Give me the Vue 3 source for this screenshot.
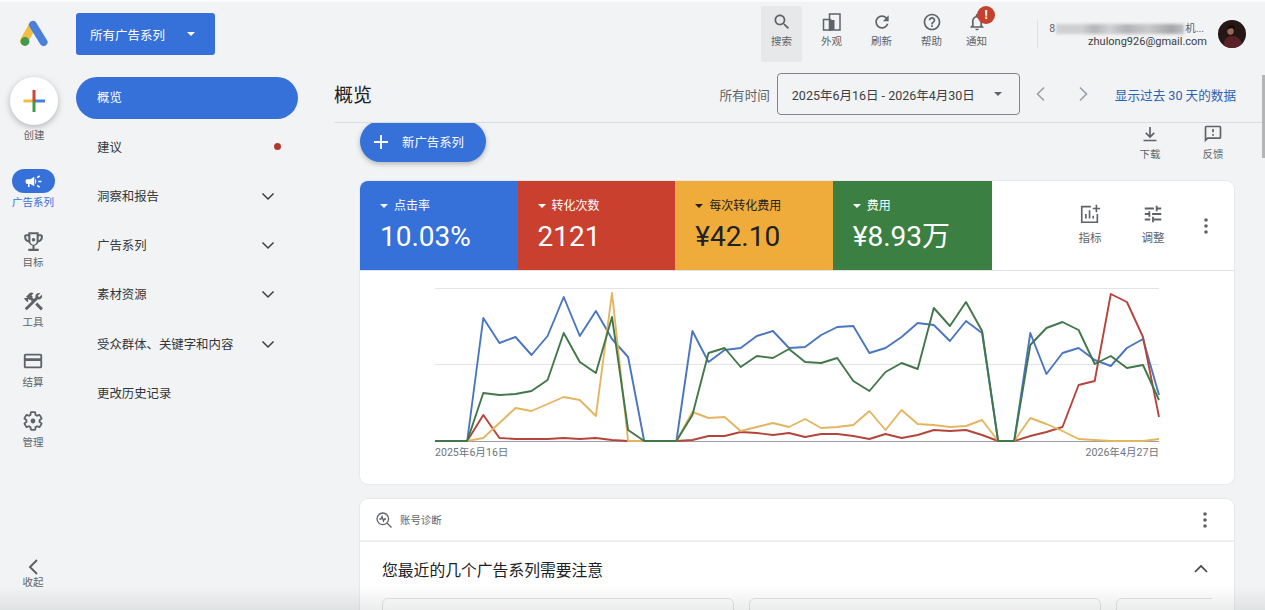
<script setup>
const railItems = [
  { label: '目标', size: 25, d: 'M19 5h-2V3H7v2H5c-1.1 0-2 .9-2 2v1c0 2.55 1.92 4.63 4.39 4.94.63 1.5 1.98 2.63 3.61 2.96V19H7v2h10v-2h-4v-3.1c1.63-.33 2.98-1.46 3.61-2.96C19.08 12.63 21 10.55 21 8V7c0-1.1-.9-2-2-2zM5 8V7h2v3.82C5.84 10.4 5 9.3 5 8zm10 4c0 1.65-1.35 3-3 3s-3-1.35-3-3V5h6v7zm4-4c0 1.3-.84 2.4-2 2.82V7h2v1z M12 8.6a1.7 1.7 0 1 0 0 3.4 1.7 1.7 0 0 0 0-3.4z' },
  { label: '工具', size: 23, d: 'M13.78 15.3l6 6 2.11-2.16-6-6zM17.5 10c1.93 0 3.5-1.57 3.5-3.5 0-.58-.16-1.12-.41-1.6l-2.7 2.7-1.49-1.49 2.7-2.7c-.48-.25-1.02-.41-1.6-.41C15.57 3 14 4.57 14 6.5c0 .41.08.8.21 1.16l-1.85 1.85-1.78-1.78.71-.71-1.41-1.41L12 3.49c-1.17-1.17-3.07-1.17-4.24 0L4.22 7.03l1.41 1.41H2.81l-.71.71 3.54 3.54.71-.71V9.15l1.41 1.41.71-.71 1.78 1.78-7.41 7.41 2.12 2.12L16.34 9.79c.36.13.75.21 1.16.21z' },
  { label: '结算', size: 22, d: 'M20 4H4c-1.11 0-1.99.89-1.99 2L2 18c0 1.11.89 2 2 2h16c1.11 0 2-.89 2-2V6c0-1.11-.89-2-2-2zm0 14H4v-6h16v6zm0-9H4V6h16v3z' },
  { label: '管理', size: 22, gear: true }
]

const navItems = [
  { label: '概览', active: true },
  { label: '建议', dot: true },
  { label: '洞察和报告', more: true },
  { label: '广告系列', more: true },
  { label: '素材资源', more: true },
  { label: '受众群体、关键字和内容', more: true },
  { label: '更改历史记录' }
]

const metrics = [
  { label: '点击率', value: '10.03%', color: '#3670d9', text: '#fff' },
  { label: '转化次数', value: '2121', color: '#c9402f', text: '#fff' },
  { label: '每次转化费用', value: '¥42.10', color: '#efac3a', text: '#202124' },
  { label: '费用', value: '¥8.93万', color: '#3b8042', text: '#fff' }
]

// y 值按截图读取，每个点间隔 16.09px
const series = [
  { color: '#4a76c0', y: [441,441,441,318,343,337,355,336,297,336,311,339,357,441,441,441,331,362,350,348,336,331,348,347,335,327,326,353,348,337,323,325,341,321,333,441,441,333,374,353,348,360,366,348,339,395] },
  { color: '#b5453c', y: [441,441,441,415,438,439,439,439,438,439,438,440,441,441,441,441,440,436,436,432,433,435,433,437,434,434,436,439,434,438,435,430,431,430,435,441,441,436,432,427,385,381,294,302,337,417] },
  { color: '#e4b560', y: [441,441,441,438,423,408,411,404,397,400,416,293,441,441,441,441,412,418,417,431,427,423,427,419,428,427,425,411,430,410,424,425,427,426,420,441,441,418,424,431,439,440,441,441,441,439] },
  { color: '#42774a', y: [441,441,441,393,395,394,391,380,333,362,373,317,430,441,441,441,415,353,348,367,356,358,349,362,363,358,381,391,372,363,369,308,326,302,331,441,441,345,328,322,330,364,356,368,365,400] }
]

const toPoints = (ys) => ys.map((y, i) => `${(435 + i * 16.09).toFixed(1)},${y}`).join(' ')
</script>

<template>
  <div class="app">
    <aside class="rail">
      <svg class="logo" viewBox="0 0 32 28" width="32" height="28">
        <path d="M16 6 L7 22" stroke="#f2bd42" stroke-width="8" stroke-linecap="round" />
        <path d="M16 6 L26.5 23" stroke="#4a80dc" stroke-width="8" stroke-linecap="round" />
        <circle cx="8" cy="22.5" r="4.4" fill="#3f9a4e" />
      </svg>
      <div class="create-btn">
        <svg viewBox="0 0 24 24" width="24" height="24">
          <path d="M1.500 12H12" stroke="#f2bd42" stroke-width="3" />
          <path d="M12 12H23" stroke="#4a80dc" stroke-width="3" />
          <path d="M12 1V12" stroke="#d04437" stroke-width="3" />
          <path d="M12 12V23" stroke="#3f9a4e" stroke-width="3" />
        </svg>
      </div>
      <div class="rail-label create-label">创建</div>

      <div class="rail-item">
        <div class="rail-pill">
          <svg viewBox="0 0 24 24" width="19" height="19" fill="#fff">
            <path d="M18 11v2h4v-2h-4zm-2 6.610c.96.71 2.210 1.650 3.200 2.390.4-.53.8-1.070 1.200-1.600-.99-.74-2.240-1.680-3.200-2.400-.4.54-.8 1.080-1.200 1.610zM20.400 5.600c-.4-.53-.8-1.070-1.200-1.600-.99.74-2.240 1.680-3.200 2.400.4.53.8 1.070 1.200 1.600.96-.72 2.210-1.650 3.200-2.400zM4 9c-1.100 0-2 .9-2 2v2c0 1.100.9 2 2 2h1v4h2v-4h1l5 3V6L8 9H4zm11.500 3c0-1.330-.58-2.530-1.500-3.350v6.690c.92-.81 1.500-2.010 1.500-3.340z" />
          </svg>
        </div>
        <div class="rail-label active">广告系列</div>
      </div>

      <div v-for="item in railItems" :key="item.label" class="rail-item">
        <div class="rail-icon">
          <svg v-if="item.gear" viewBox="0 0 24 24" :width="item.size" :height="item.size">
            <path d="M19.140 12.940c.04-.3.06-.61.06-.94 0-.32-.02-.64-.07-.94l2.030-1.580c.18-.14.23-.41.12-.61l-1.920-3.320c-.12-.22-.37-.29-.59-.22l-2.390.96c-.5-.38-1.030-.7-1.620-.94l-.36-2.540c-.04-.24-.24-.41-.48-.41h-3.840c-.24 0-.43.17-.47.41l-.36 2.540c-.59.24-1.130.57-1.620.94l-2.390-.96c-.22-.08-.47 0-.59.22L2.740 8.870c-.12.21-.08.47.12.61l2.030 1.580c-.05.3-.07.63-.07.94s.02.64.07.94l-2.030 1.580c-.18.14-.23.41-.12.61l1.920 3.320c.12.22.37.29.59.22l2.390-.96c.5.38 1.030.7 1.620.94l.36 2.540c.05.24.24.41.48.41h3.840c.24 0 .44-.17.47-.41l.36-2.540c.59-.24 1.130-.56 1.620-.94l2.390.96c.22.08.47 0 .59-.22l1.920-3.320c.12-.22.07-.47-.12-.61l-2.010-1.580z" fill="none" stroke="#5f6368" stroke-width="2" />
            <circle cx="12" cy="12" r="2.600" fill="#5f6368" />
          </svg>
          <svg v-else viewBox="0 0 24 24" :width="item.size" :height="item.size" fill="#5f6368" fill-rule="evenodd">
            <path :d="item.d" />
          </svg>
        </div>
        <div class="rail-label">{{ item.label }}</div>
      </div>

      <div class="rail-item collapse">
        <div class="rail-icon">
          <svg viewBox="0 0 24 24" width="24" height="24" fill="none" stroke="#5f6368" stroke-width="2">
            <path d="M16 5l-7 7 7 7" />
          </svg>
        </div>
        <div class="rail-label">收起</div>
      </div>
    </aside>

    <nav class="side">
      <div class="scope-btn">
        <span>所有广告系列</span>
        <i class="caret white"></i>
      </div>
      <ul class="nav-list">
        <li v-for="item in navItems" :key="item.label" class="nav-row" :class="{ active: item.active }">
          <span>{{ item.label }}</span>
          <i v-if="item.dot" class="red-dot"></i>
          <svg v-if="item.more" viewBox="0 0 20 20" width="20" height="20" fill="none" stroke="#3c4043" stroke-width="1.500">
            <path d="M4.500 7.500l5.500 5.500 5.500-5.500" />
          </svg>
        </li>
      </ul>
    </nav>

    <main class="main">
      <header class="topbar">
        <div class="tool hover">
          <svg viewBox="0 0 24 24" width="20" height="20" fill="#5f6368">
            <path d="M15.500 14h-.79l-.28-.27C15.410 12.590 16 11.110 16 9.500 16 5.910 13.090 3 9.500 3S3 5.910 3 9.500 5.910 16 9.500 16c1.610 0 3.090-.59 4.230-1.570l.27.28v.79l5 4.990L20.490 19l-4.990-5zm-6 0C7.010 14 5 11.990 5 9.500S7.010 5 9.500 5 14 7.010 14 9.500 11.990 14 9.500 14z" />
          </svg>
          <span>搜索</span>
        </div>
        <div class="tool">
          <svg viewBox="0 0 20 20" width="20" height="20" fill="none" stroke="#5f6368" stroke-width="1.500">
            <path d="M1.500 7.500h7V18h-7z" />
            <path d="M7.500 2h10.500v16H7.500z" />
            <path d="M8 8h4.500v10H8z" fill="#5f6368" stroke="none" />
          </svg>
          <span>外观</span>
        </div>
        <div class="tool">
          <svg viewBox="0 0 24 24" width="20" height="20" fill="#5f6368">
            <path d="M17.650 6.350C16.200 4.900 14.210 4 12 4c-4.420 0-7.990 3.580-7.990 8s3.570 8 7.990 8c3.730 0 6.840-2.550 7.730-6h-2.080c-.82 2.330-3.040 4-5.650 4-3.310 0-6-2.690-6-6s2.690-6 6-6c1.660 0 3.140.69 4.220 1.780L13 11h7V4l-2.350 2.350z" />
          </svg>
          <span>刷新</span>
        </div>
        <div class="tool">
          <svg viewBox="0 0 24 24" width="20" height="20" fill="#5f6368">
            <path d="M11 18h2v-2h-2v2zm1-16C6.480 2 2 6.480 2 12s4.480 10 10 10 10-4.480 10-10S17.520 2 12 2zm0 18c-4.410 0-8-3.590-8-8s3.590-8 8-8 8 3.590 8 8-3.590 8-8 8zm0-14c-2.210 0-4 1.790-4 4h2c0-1.100.9-2 2-2s2 .9 2 2c0 2-3 1.750-3 5h2c0-2.250 3-2.500 3-5 0-2.210-1.790-4-4-4z" />
          </svg>
          <span>帮助</span>
        </div>
        <div class="tool bell">
          <svg viewBox="0 0 24 24" width="20" height="20" fill="#5f6368">
            <path d="M12 22c1.100 0 2-.9 2-2h-4c0 1.100.9 2 2 2zm6-6v-5c0-3.070-1.630-5.640-4.500-6.320V4c0-.83-.67-1.500-1.500-1.500s-1.500.67-1.500 1.500v.68C7.640 5.360 6 7.920 6 11v5l-2 2v1h16v-1l-2-2zm-2 1H8v-6c0-2.480 1.510-4.500 4-4.500s4 2.020 4 4.500v6z" />
          </svg>
          <span>通知</span>
          <b class="badge">!</b>
        </div>
        <div class="sep"></div>
        <div class="account">
          <div class="account-name"><span>8</span><i class="blurred"></i><span>机...</span></div>
          <div class="account-mail">zhulong926@gmail.com</div>
        </div>
        <svg class="avatar" viewBox="0 0 28 28" width="28" height="28">
          <defs><clipPath id="avatar-clip"><circle cx="14" cy="14" r="14" /></clipPath></defs>
          <g clip-path="url(#avatar-clip)">
            <rect width="28" height="28" fill="#241715" />
            <path d="M5 28c0-8 4-12 9-12s8 3 11 8l-2 4z" fill="#5a2129" />
            <ellipse cx="12.500" cy="11" rx="3.200" ry="3.800" fill="#9a6a55" />
            <path d="M9 10c0-4 3-5.500 6-4.500 2 1 2 3 1.500 4-2-2-5-1.500-7.500.5z" fill="#120b0a" />
          </g>
        </svg>
      </header>

      <div class="page-head">
        <h1>概览</h1>
        <span class="range-label">所有时间</span>
        <div class="date-box">
          <span>2025年6月16日 - 2026年4月30日</span>
          <i class="caret"></i>
        </div>
        <svg class="prev" viewBox="0 0 20 20" width="20" height="20" fill="none" stroke="#9aa0a6" stroke-width="1.600">
          <path d="M13 3.500L6.500 10l6.500 6.500" />
        </svg>
        <svg class="next" viewBox="0 0 20 20" width="20" height="20" fill="none" stroke="#9aa0a6" stroke-width="1.600">
          <path d="M7 3.500l6.500 6.500L7 16.500" />
        </svg>
        <a class="last-days">显示过去 30 天的数据</a>
      </div>

      <div class="body">
        <div class="actions">
          <div class="new-btn">
            <svg viewBox="0 0 20 20" width="20" height="20" stroke="#fff" stroke-width="1.800">
              <path d="M10 3v14M3 10h14" />
            </svg>
            <span>新广告系列</span>
          </div>
          <div class="action-links">
            <div class="action">
              <svg viewBox="0 0 20 20" width="20" height="20" fill="none" stroke="#5f6368" stroke-width="1.700">
                <path d="M10 3v10M5.800 8.800L10 13l4.200-4.200M3.500 16.500h13" />
              </svg>
              <span>下载</span>
            </div>
            <div class="action">
              <svg viewBox="0 0 24 24" width="20" height="20" fill="#5f6368">
                <path d="M20 2H4c-1.100 0-2 .9-2 2v18l4-4h14c1.100 0 2-.9 2-2V4c0-1.100-.9-2-2-2zm0 14H5.170L4 17.170V4h16v12zM11 12h2v2h-2zm0-6h2v4h-2z" />
              </svg>
              <span>反馈</span>
            </div>
          </div>
        </div>

        <section class="card chart-card">
          <div class="metrics">
            <div v-for="m in metrics" :key="m.label" class="metric" :style="{ background: m.color, color: m.text }">
              <div class="metric-title"><i class="caret small"></i>{{ m.label }}</div>
              <div class="metric-value">{{ m.value }}</div>
            </div>
            <div class="metric-tools">
              <div class="m-tool">
                <svg viewBox="0 0 24 24" width="22" height="22" fill="none" stroke="#5f6368" stroke-width="1.800">
                  <path d="M13 4H3v17h17v-9M7.500 17v-5M11.500 17V8M15.500 17v-3M19 2v8M15 6h8" />
                </svg>
                <span>指标</span>
              </div>
              <div class="m-tool">
                <svg viewBox="0 0 24 24" width="22" height="22" fill="#5f6368">
                  <path d="M3 17v2h6v-2H3zM3 5v2h10V5H3zm10 16v-2h8v-2h-8v-2h-2v6h2zM7 9v2H3v2h4v2h2V9H7zm14 4v-2H11v2h10zm-6-4h2V7h4V5h-4V3h-2v6z" />
                </svg>
                <span>调整</span>
              </div>
              <svg class="dots" viewBox="0 0 24 24" width="24" height="24" fill="#5f6368">
                <circle cx="12" cy="6" r="1.800" /><circle cx="12" cy="12" r="1.800" /><circle cx="12" cy="18" r="1.800" />
              </svg>
            </div>
          </div>
          <svg class="chart" viewBox="360 271 874 213" width="874" height="213">
            <path d="M435 288.500H1159M435 364.500H1159" stroke="#e2e3e4" fill="none" />
            <path d="M435 441.500H1159" stroke="#9aa0a6" fill="none" />
            <polyline v-for="s in series" :key="s.color" :points="toPoints(s.y)" :stroke="s.color" fill="none" stroke-width="1.900" stroke-linejoin="round" />
            <text x="435" y="456" class="axis">2025年6月16日</text>
            <text x="1159" y="456" class="axis" text-anchor="end">2026年4月27日</text>
          </svg>
        </section>

        <section class="card diag-card">
          <div class="diag-head">
            <svg viewBox="0 0 18 18" width="18" height="18" fill="none" stroke="#5f6368" stroke-width="1.300">
              <circle cx="7.800" cy="7.800" r="5.800" />
              <path d="M12 12l4.500 4.500M4.300 8h1.700l1-2.400 1.500 4.400 1-2h1.500" />
            </svg>
            <span>账号诊断</span>
            <svg class="dots" viewBox="0 0 24 24" width="24" height="24" fill="#5f6368">
              <circle cx="12" cy="6" r="1.800" /><circle cx="12" cy="12" r="1.800" /><circle cx="12" cy="18" r="1.800" />
            </svg>
          </div>
          <div class="diag-title">
            <span>您最近的几个广告系列需要注意</span>
            <svg viewBox="0 0 20 20" width="20" height="20" fill="none" stroke="#3c4043" stroke-width="1.600">
              <path d="M4 13l6-6 6 6" />
            </svg>
          </div>
          <div class="diag-cards">
            <div class="diag-item"></div>
            <div class="diag-item"></div>
            <div class="diag-item"></div>
          </div>
        </section>
      </div>
    </main>

    <div class="scrollbar"></div>
    <div class="bottom-fade"></div>
  </div>
</template>

<style scoped>
.app {
  position: relative;
  display: flex;
  width: 1265px;
  height: 610px;
  overflow: hidden;
  background: #f1f3f4;
  box-shadow: inset 0 2px 0 #fbfbfb;
  color: #3c4043;
  font-family: Roboto, "Noto Sans CJK SC", sans-serif;
}

.rail {
  flex: 0 0 66px;
  display: flex;
  flex-direction: column;
  align-items: center;
  padding-top: 19px;
  box-sizing: border-box;
}

.logo {
  margin-bottom: 30px;
}

.create-btn {
  display: flex;
  align-items: center;
  justify-content: center;
  width: 48px;
  height: 48px;
  margin-left: 2px;
  border-radius: 50%;
  background: #fff;
  box-shadow: 0 2px 6px rgba(60, 64, 67, 0.35);
}

.rail-label {
  height: 14px;
  margin-top: 3px;
  font-size: 10.500px;
  line-height: 14px;
  color: #5f6368;
  white-space: nowrap;
}

.rail-label.active {
  color: #3670d9;
}

.create-label {
  margin-top: 4px;
  margin-left: 2px;
  margin-bottom: 26px;
}

.rail-item {
  display: flex;
  flex-direction: column;
  align-items: center;
  height: 60px;
}

.rail-pill {
  display: flex;
  align-items: center;
  justify-content: center;
  width: 43px;
  height: 24px;
  border-radius: 12px;
  background: #3670d9;
}

.rail-icon {
  display: flex;
  align-items: center;
  justify-content: center;
  height: 24px;
}

.collapse {
  margin-top: auto;
  height: auto;
  margin-bottom: 20px;
}

.collapse .rail-label {
  margin-top: -3px;
}

.side {
  flex: 0 0 244px;
  padding: 13px 0 0 10px;
  box-sizing: border-box;
}

.scope-btn {
  display: flex;
  align-items: center;
  justify-content: space-between;
  width: 139px;
  height: 42px;
  padding: 0 20px 0 14px;
  box-sizing: border-box;
  border-radius: 3px;
  background: #3670d9;
  color: #fff;
  font-size: 12.500px;
}

.caret {
  display: inline-block;
  width: 0;
  height: 0;
  border-left: 4.500px solid transparent;
  border-right: 4.500px solid transparent;
  border-top: 4.500px solid #5f6368;
}

.caret.white {
  border-top-color: #fff;
}

.caret.small {
  margin-right: 6px;
  border-top-color: currentColor;
  vertical-align: 2px;
}

.nav-list {
  display: flex;
  flex-direction: column;
  gap: 7.300px;
  margin: 22px 0 0;
  padding: 0;
  list-style: none;
}

.nav-row {
  display: flex;
  align-items: center;
  justify-content: space-between;
  width: 222px;
  height: 42px;
  padding: 0 20px 1.500px 21px;
  box-sizing: border-box;
  border-radius: 21px;
  font-size: 12.400px;
  color: #33363a;
}

.nav-row.active {
  background: #3670d9;
  color: #fff;
}

.red-dot {
  width: 7px;
  height: 7px;
  margin-right: -3px;
  border-radius: 50%;
  background: #b3372f;
}

.main {
  flex: 1;
  min-width: 0;
  display: flex;
  flex-direction: column;
}

.topbar {
  display: flex;
  justify-content: flex-end;
  align-items: flex-start;
  flex: 0 0 62px;
  padding: 6px 19px 0 0;
  box-sizing: border-box;
}

.tool {
  position: relative;
  display: flex;
  flex-direction: column;
  align-items: center;
  width: 41px;
  height: 56px;
  margin-right: 9px;
  padding-top: 6px;
  box-sizing: border-box;
  border-radius: 2px;
  color: #5f6368;
}

.tool span {
  margin-top: 3px;
  font-size: 10.500px;
  line-height: 14px;
  white-space: nowrap;
}

.tool.hover {
  background: #e6e8ea;
}

.tool.bell {
  margin-left: -5px;
  margin-right: 0;
}

.badge {
  position: absolute;
  top: 0;
  left: 21px;
  width: 18px;
  height: 18px;
  border-radius: 50%;
  background: #c5402f;
  color: #fff;
  font-size: 12px;
  line-height: 18px;
  text-align: center;
}

.sep {
  width: 1px;
  height: 28px;
  margin: 14px 0 0 40px;
  background: #dfe1e3;
}

.account {
  width: 169px;
  margin-top: 16px;
  text-align: right;
  font-size: 11px;
  line-height: 13px;
  color: #3c4043;
}

.account-name {
  display: flex;
  align-items: center;
  justify-content: flex-end;
  padding-right: 3px;
  font-size: 10.500px;
  color: #5f6368;
}

.blurred {
  width: 128px;
  height: 10px;
  margin: 0 1px;
  background: linear-gradient(90deg, #cfd0d2 0 20%, #b4b5b8 30%, #d0d1d3 42%, #b2b3b6 55%, #c9cacc 72%, #a4a6a9 90%, #bdbec1 100%);
  filter: blur(1.500px);
}

.avatar {
  margin: 14px 0 0 11px;
}

.page-head {
  display: flex;
  align-items: center;
  flex: 0 0 61px;
  margin-left: 24px;
  padding: 4px 29px 0 0;
  box-sizing: border-box;
  border-bottom: 1px solid #dadce0;
}

.page-head h1 {
  margin: -2px auto 0 0;
  font-size: 19px;
  font-weight: 400;
  color: #202124;
}

.range-label {
  font-size: 12.600px;
  color: #5f6368;
}

.date-box {
  display: flex;
  align-items: center;
  justify-content: space-between;
  width: 243px;
  height: 42px;
  margin-left: 7px;
  padding: 0 17px 0 14px;
  box-sizing: border-box;
  border: 1px solid #80868b;
  border-radius: 4px;
  font-size: 12.500px;
  color: #3c4043;
}

.prev {
  margin-left: 11px;
}

.next {
  margin-left: 22px;
}

.last-days {
  margin-left: 22px;
  font-size: 12.600px;
  color: #2c62b4;
  white-space: nowrap;
}

.body {
  flex: 1;
  min-height: 0;
  padding: 0 31px 0 50px;
  overflow: hidden;
}

.actions {
  display: flex;
  justify-content: space-between;
  height: 58px;
}

.new-btn {
  display: flex;
  align-items: center;
  gap: 11px;
  width: 126px;
  height: 41px;
  margin-top: -2px;
  padding-left: 11px;
  box-sizing: border-box;
  border-radius: 21px;
  background: #3670d9;
  color: #fff;
  font-size: 12.400px;
  box-shadow: 0 2px 5px rgba(60, 64, 67, 0.35);
}

.action-links {
  display: flex;
  gap: 21px;
}

.action {
  display: flex;
  flex-direction: column;
  align-items: center;
  width: 42px;
  padding-top: 1px;
  font-size: 10.500px;
  color: #5f6368;
}

.action span {
  margin-top: 4px;
  line-height: 14px;
}

.card {
  background: #fff;
  box-shadow: 0 0 0 1px #e6e8ea;
  border-radius: 8px;
  overflow: hidden;
}

.chart-card {
  height: 303px;
}

.metrics {
  display: flex;
  height: 89px;
  border-bottom: 1px solid #e0e2e4;
}

.metric {
  flex: 0 0 157.600px;
  padding: 16.500px 0 0 20px;
  box-sizing: border-box;
}

.metric:nth-child(4) {
  flex-basis: 159.500px;
}

.metric-title {
  font-size: 12px;
  line-height: 16px;
  white-space: nowrap;
}

.metric-value {
  margin-top: 6px;
  font-size: 28px;
  line-height: 34px;
  white-space: nowrap;
}

.metric-tools {
  flex: 1;
  display: flex;
  align-items: center;
  justify-content: flex-end;
  gap: 13px;
  padding-right: 16px;
}

.metric-tools .dots {
  margin-left: 3px;
}

.m-tool {
  display: flex;
  flex-direction: column;
  align-items: center;
  width: 50px;
  padding-bottom: 3px;
  font-size: 11.500px;
  color: #5f6368;
}

.m-tool span {
  margin-top: 7px;
  line-height: 13px;
}

.chart {
  display: block;
}

.axis {
  font-size: 10.600px;
  fill: #70757a;
}

.diag-card {
  height: 160px;
  margin-top: 15px;
}

.diag-head {
  display: flex;
  align-items: center;
  gap: 7px;
  height: 43px;
  box-sizing: border-box;
  padding: 0 17px 0 15px;
  border-bottom: 2px solid #eeeff0;
  font-size: 10.400px;
  color: #5f6368;
}

.diag-head .dots {
  margin-left: auto;
}

.diag-title {
  display: flex;
  align-items: center;
  justify-content: space-between;
  height: 54px;
  padding: 0 23px 0 22px;
  font-size: 15.800px;
  color: #202124;
}

.diag-cards {
  display: flex;
  gap: 15px;
  margin: 2px 22px 0;
  overflow: hidden;
}

.diag-item {
  flex: 0 0 352px;
  height: 60px;
  box-sizing: border-box;
  border: 1px solid #e0e2e4;
  border-radius: 6px;
}

.scrollbar {
  position: absolute;
  top: 75px;
  right: 0;
  width: 3px;
  height: 83px;
  background: #b3b5b7;
}

.bottom-fade {
  position: absolute;
  left: 0;
  right: 0;
  bottom: 0;
  height: 24px;
  background: linear-gradient(rgba(120, 124, 128, 0), rgba(120, 124, 128, 0.14));
  pointer-events: none;
}
</style>
